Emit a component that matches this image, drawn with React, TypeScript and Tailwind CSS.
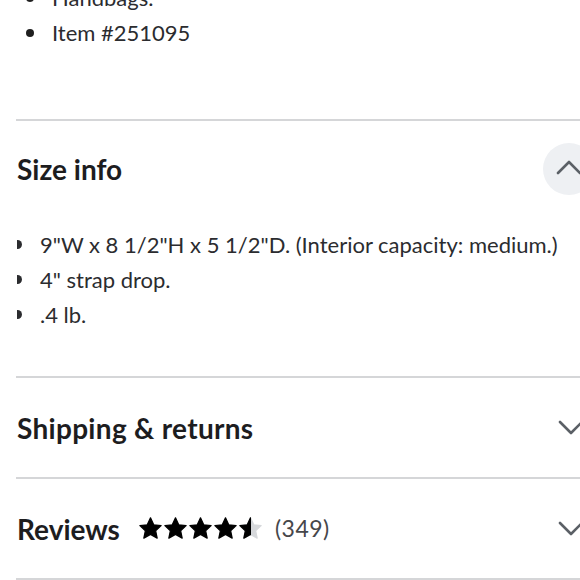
const font = { fontFamily: 'Lato, "Open Sans", sans-serif' };

function Star({ fill }: { fill: 'full' | 'half' }) {
  const d =
    'M12 1.8l3.1 6.6 7.1.8-5.3 4.9 1.5 7.1L12 17.6l-6.4 3.6 1.5-7.1L1.8 9.2l7.1-.8z';
  return (
    <svg viewBox="0 0 24 24" className="w-[25px] h-[25px]">
      <defs>
        <clipPath id="half-left">
          <rect x="0" y="0" width="12.5" height="24" />
        </clipPath>
      </defs>
      {fill === 'full' ? (
        <path d={d} fill="#000" strokeLinejoin="round" stroke="#000" strokeWidth="1.2" />
      ) : (
        <>
          <path d={d} fill="#d6d8db" strokeLinejoin="round" stroke="#d6d8db" strokeWidth="1.2" />
          <path d={d} fill="#000" clipPath="url(#half-left)" strokeLinejoin="round" stroke="#000" strokeWidth="1.2" />
        </>
      )}
    </svg>
  );
}

function Chevron({ up }: { up?: boolean }) {
  return (
    <svg width="26" height="15" viewBox="0 0 26 15" fill="none">
      <polyline
        points={up ? '2,13 13,2 24,13' : '2,2 13,13 24,2'}
        stroke="#5b6066"
        strokeWidth="2.6"
        strokeLinecap="round"
        strokeLinejoin="round"
      />
    </svg>
  );
}

function Section({
  title,
  tall,
  children,
}: {
  title: React.ReactNode;
  tall?: boolean;
  children?: React.ReactNode;
}) {
  return (
    <div className="border-t-2 border-[#d5d6d8]">
      <div className={`flex items-center justify-between pl-[1px] ${tall ? 'h-[96px]' : 'h-[99px]'}`}>
        {title}
      </div>
      {children}
    </div>
  );
}

export default function App() {
  const sizeInfo = [
    '9"W x 8 1/2"H x 5 1/2"D. (Interior capacity: medium.)',
    '4" strap drop.',
    '.4 lb.',
  ];

  return (
    <div className="w-[580px] h-[580px] overflow-hidden bg-white text-[#2b2c2f]" style={font}>
      <div className="w-[595px] pl-[16px]">
        <ul className="-mt-[20px] pl-[10px] text-[22px] leading-[35px] h-[139px]">
          <li className="flex items-center">
            <span className="w-[8px] h-[8px] rounded-full bg-[#1f1f1f] mr-[18px]" />
            Handbags.
          </li>
          <li className="flex items-center">
            <span className="w-[8px] h-[8px] rounded-full bg-[#1f1f1f] mr-[18px]" />
            Item #251095
          </li>
        </ul>

        <Section
          tall
          title={
            <>
              <h2 className="text-[28px] font-bold text-[#1d1d1f]">Size info</h2>
              <button className="w-[52px] h-[52px] rounded-full bg-[#eef0f3] flex items-center justify-center pb-[4px]">
                <Chevron up />
              </button>
            </>
          }
        >
          <ul className="pl-[1px] pt-[10px] pb-[44px] text-[22px] leading-[35px]">
            {sizeInfo.map((s) => (
              <li key={s} className="flex items-center">
                <span className="w-[5px] h-[9px] rounded-r-full bg-[#2b2c2f] mr-[18px]" />
                {s}
              </li>
            ))}
          </ul>
        </Section>

        <Section
          title={
            <>
              <h2 className="text-[28px] font-bold text-[#1d1d1f] tracking-[0.3px]">Shipping &amp; returns</h2>
              <div className="mr-[11px]">
                <Chevron />
              </div>
            </>
          }
        />

        <Section
          title={
            <>
              <div className="flex items-center">
                <h2 className="text-[28px] font-bold text-[#1d1d1f]">Reviews</h2>
                <div className="flex items-center ml-[18px]">
                  <Star fill="full" />
                  <Star fill="full" />
                  <Star fill="full" />
                  <Star fill="full" />
                  <Star fill="half" />
                </div>
                <span className="ml-[12px] text-[23px] text-[#46474a] tracking-[0.5px]">(349)</span>
              </div>
              <div className="mr-[11px]">
                <Chevron />
              </div>
            </>
          }
        />
        <div className="border-t-2 border-[#d5d6d8]" />
      </div>
    </div>
  );
}
